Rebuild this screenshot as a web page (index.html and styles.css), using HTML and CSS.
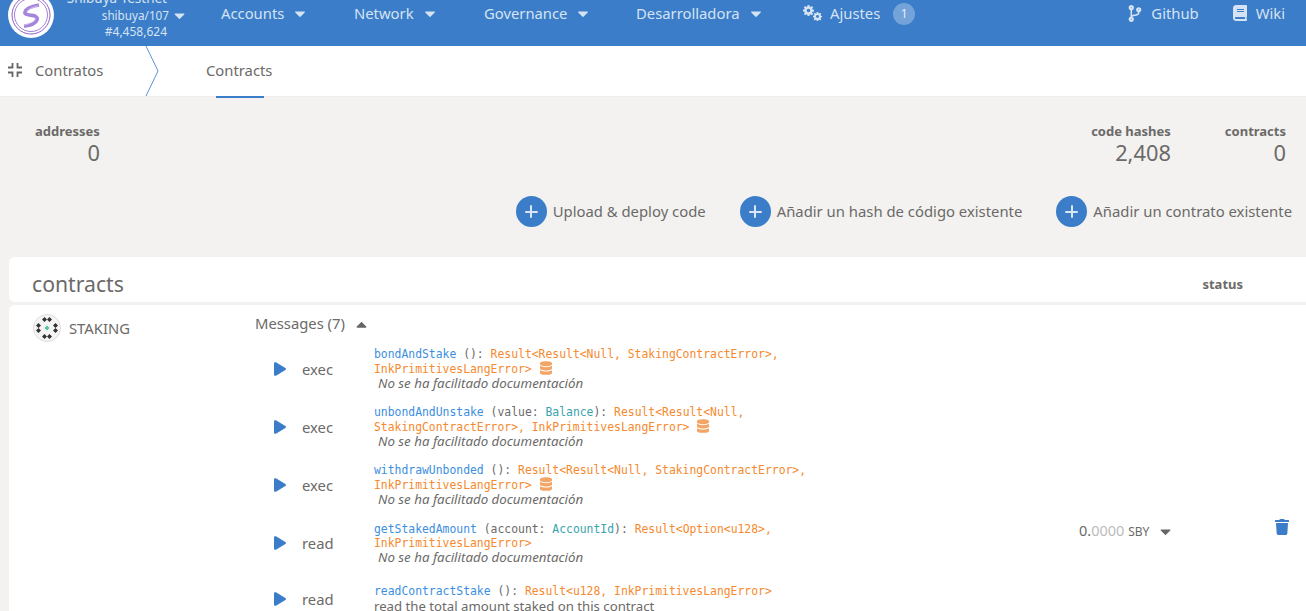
FILE: index.html
```html
<!DOCTYPE html>
<html lang="en">
<head>
    <meta charset="UTF-8">
    <title>Contracts</title>
    <link rel="stylesheet" href="styles.css">
</head>
<body>

<svg class="sprites" width="0" height="0">
    <symbol id="caret" viewBox="0 0 320 512"><path d="M31.3 192h257.3c17.8 0 26.7 21.5 14.1 34.1L174.1 354.8c-7.8 7.8-20.5 7.8-28.3 0L17.2 226.1C4.6 213.5 13.5 192 31.3 192z"/></symbol>
    <symbol id="caret-up" viewBox="0 0 320 512"><path d="M288.7 352H31.3c-17.8 0-26.7-21.5-14.1-34.1l128.7-128.7c7.8-7.8 20.5-7.8 28.3 0l128.7 128.7c12.6 12.6 3.7 34.1-14.2 34.1z"/></symbol>
    <symbol id="play" viewBox="0 0 448 512"><path d="M424.4 214.7L72.4 6.6C43.8-10.3 0 6.1 0 47.9V464c0 37.5 40.7 60.1 72.4 41.3l352-208c31.4-18.5 31.5-64.1 0-82.6z"/></symbol>
    <symbol id="database" viewBox="0 0 448 512"><path d="M448 73.143v45.714C448 159.143 347.667 192 224 192S0 159.143 0 118.857V73.143C0 32.857 100.333 0 224 0s224 32.857 224 73.143zM448 176v102.857C448 319.143 347.667 352 224 352S0 319.143 0 278.857V176c48.125 33.143 136.208 48.572 224 48.572S399.874 209.143 448 176zm0 160v102.857C448 479.143 347.667 512 224 512S0 479.143 0 438.857V336c48.125 33.143 136.208 48.572 224 48.572S399.874 369.143 448 336z"/></symbol>
    <symbol id="gear" viewBox="0 0 16 16"><path fill-rule="evenodd" d="M6.7 0h2.6l.4 2.2 1.3.6 1.9-1.3 1.8 1.8-1.3 1.9.6 1.3 2 .4v2.6l-2 .4-.6 1.3 1.3 1.9-1.8 1.8-1.9-1.3-1.3.6-.4 2H6.7l-.4-2-1.3-.6-1.9 1.3-1.8-1.8 1.3-1.9-.6-1.3-2-.4V6.7l2-.4.6-1.3-1.3-1.9 1.8-1.8L5 2.8l1.3-.6zM8 5.4a2.6 2.6 0 1 0 0 5.2 2.6 2.6 0 0 0 0-5.2z"/></symbol>
</svg>

<header class="topbar">
    <div class="logo">
        <svg viewBox="0 0 46 46" width="46" height="46">
            <circle cx="23" cy="23" r="23" fill="#fff"/>
            <circle cx="23" cy="23" r="19" fill="none" stroke="#8a63c9" stroke-width="1"/>
            <circle cx="23" cy="23" r="16.5" fill="none" stroke="#8a63c9" stroke-width="0.8"/>
            <path d="M31 13c-6 1-13 3-14 7-1 3 6 3 10 4 4 2 2 6-2 8-3 1-6 2-9 2" fill="none" stroke="#a585dc" stroke-width="3.6"/>
            <path d="M30 14c-5 1-10 3-11 6M27 26c0 3-5 6-11 7" fill="none" stroke="#e4d9f5" stroke-width="0.7"/>
        </svg>
    </div>
    <div class="chain">
        <div class="chain-name">Shibuya Testnet</div>
        <div class="chain-ver">shibuya/107 <svg class="caret"><use href="#caret"/></svg></div>
        <div class="chain-block">#4,458,624</div>
    </div>
    <nav class="menu">
        <a class="menu-accounts">Accounts <svg class="caret"><use href="#caret"/></svg></a>
        <a class="menu-network">Network <svg class="caret"><use href="#caret"/></svg></a>
        <a class="menu-gov">Governance <svg class="caret"><use href="#caret"/></svg></a>
        <a class="menu-dev">Desarrolladora <svg class="caret"><use href="#caret"/></svg></a>
        <a class="menu-settings">
            <span class="cogs">
                <svg class="cog-big"><use href="#gear"/></svg>
                <svg class="cog-small"><use href="#gear"/></svg>
            </span>
            Ajustes
            <span class="badge">1</span>
        </a>
    </nav>
    <div class="links">
        <a class="link-github">
            <svg viewBox="0 0 384 512" width="14" height="17"><path fill="currentColor" d="M384 144c0-44.2-35.8-80-80-80s-80 35.8-80 80c0 36.4 24.3 67.1 57.5 76.8-.6 16.1-4.2 28.5-11 36.9-15.4 19.2-49.3 22.4-85.2 25.7-28.2 2.6-57.4 5.4-81.3 16.9v-144c32.5-10.2 56-40.5 56-76.3 0-44.2-35.8-80-80-80S0 35.8 0 80c0 35.8 23.5 66.1 56 76.3v199.3C23.5 365.9 0 396.2 0 432c0 44.2 35.8 80 80 80s80-35.8 80-80c0-34-21.2-63.1-51.2-74.6 3.1-5.2 7.8-9.8 14.9-13.4 16.2-8.2 40.4-10.4 66.1-12.8 42.2-3.9 90-8.4 118.2-43.4 14-17.4 21.1-39.8 21.6-67.9 31.6-10.8 54.4-40.7 54.4-75.9zM80 64c8.8 0 16 7.2 16 16s-7.2 16-16 16-16-7.2-16-16 7.2-16 16-16zm0 384c-8.8 0-16-7.2-16-16s7.2-16 16-16 16 7.2 16 16-7.2 16-16 16zm224-320c8.8 0 16 7.2 16 16s-7.2 16-16 16-16-7.2-16-16 7.2-16 16-16z"/></svg>
            Github
        </a>
        <a class="link-wiki">
            <svg viewBox="0 0 448 512" width="14" height="16"><path fill="currentColor" d="M448 360V24c0-13.3-10.7-24-24-24H96C43 0 0 43 0 96v320c0 53 43 96 96 96h328c13.3 0 24-10.7 24-24v-16c0-7.5-3.5-14.3-8.9-18.7-4.2-15.4-4.2-59.3 0-74.7 5.4-4.3 8.9-11.1 8.9-18.6zM128 134c0-3.3 2.7-6 6-6h212c3.3 0 6 2.7 6 6v20c0 3.3-2.7 6-6 6H134c-3.3 0-6-2.7-6-6v-20zm0 64c0-3.3 2.7-6 6-6h212c3.3 0 6 2.7 6 6v20c0 3.3-2.7 6-6 6H134c-3.3 0-6-2.7-6-6v-20zm253.4 250H96c-17.7 0-32-14.3-32-32 0-17.6 14.4-32 32-32h285.4c-1.9 17.1-1.9 46.9 0 64z"/></svg>
            Wiki
        </a>
    </div>
</header>

<div class="tabs">
    <div class="tabs-title">
        <svg viewBox="0 0 14 14" width="14" height="14"><path d="M4.5 0v4.5H0M9.5 0v4.5H14M4.5 14V9.5H0M9.5 14V9.5H14" fill="none" stroke="#666" stroke-width="1.8"/></svg>
        Contratos
    </div>
    <svg class="tabs-arrow" viewBox="0 0 14 50" width="14" height="50"><path d="M1 0l12 25L1 50" fill="none" stroke="#5b93d6" stroke-width="1"/></svg>
    <a class="tab">Contracts</a>
</div>

<section class="summary">
    <div class="stats">
        <div class="stat">
            <label>addresses</label>
            <div class="stat-value">0</div>
        </div>
        <div class="stat stat-hashes">
            <label>code hashes</label>
            <div class="stat-value">2,408</div>
        </div>
        <div class="stat stat-contracts">
            <label>contracts</label>
            <div class="stat-value">0</div>
        </div>
    </div>
    <div class="actions">
        <a class="action"><span class="plus"></span>Upload &amp; deploy code</a>
        <a class="action"><span class="plus"></span>Añadir un hash de código existente</a>
        <a class="action"><span class="plus"></span>Añadir un contrato existente</a>
    </div>
</section>

<section class="list">
    <div class="list-head">
        <h1>contracts</h1>
        <div class="list-status">status</div>
    </div>
    <div class="contract">
        <div class="contract-name">
            <svg viewBox="0 0 28 28" width="28" height="28">
                <circle cx="14" cy="14" r="13.5" fill="#f4f4f4" stroke="#ddd"/>
                <g fill="#333">
                    <path d="M11.500 3l2.500 2.500-2.500 2.500-2.500-2.500zM16.500 3l2.500 2.500-2.500 2.500-2.500-2.500z"/>
                    <path d="M5.500 9l2.500 2.500-2.500 2.500-2.500-2.500zM5.500 14l2.500 2.500-2.500 2.500-2.500-2.500z"/>
                    <path d="M22.500 9l2.500 2.500-2.500 2.500-2.500-2.500zM22.500 14l2.500 2.500-2.500 2.500-2.500-2.500z"/>
                    <path d="M11.500 20l2.500 2.500-2.500 2.500-2.500-2.500zM16.500 20l2.500 2.500-2.500 2.500-2.500-2.500z"/>
                </g>
                <path d="M14 11.500l2.500 2.500-2.500 2.500-2.500-2.500z" fill="#5cc09a"/>
            </svg>
            STAKING
        </div>
        <div class="messages">
            <div class="messages-toggle">Messages (7) <svg class="caret caret-dark"><use href="#caret-up"/></svg></div>

            <div class="msg">
                <svg class="play"><use href="#play"/></svg>
                <div class="msg-kind">exec</div>
                <div class="msg-text">
                    <div class="sig"><span class="fn">bondAndStake</span> (): <span class="ret">Result&lt;Result&lt;Null, StakingContractError&gt;, InkPrimitivesLangError&gt;</span> <svg class="db"><use href="#database"/></svg></div>
                    <div class="doc">No se ha facilitado documentación</div>
                </div>
            </div>

            <div class="msg">
                <svg class="play"><use href="#play"/></svg>
                <div class="msg-kind">exec</div>
                <div class="msg-text">
                    <div class="sig"><span class="fn">unbondAndUnstake</span> (value: <span class="type">Balance</span>): <span class="ret">Result&lt;Result&lt;Null, StakingContractError&gt;, InkPrimitivesLangError&gt;</span> <svg class="db"><use href="#database"/></svg></div>
                    <div class="doc">No se ha facilitado documentación</div>
                </div>
            </div>

            <div class="msg">
                <svg class="play"><use href="#play"/></svg>
                <div class="msg-kind">exec</div>
                <div class="msg-text">
                    <div class="sig"><span class="fn">withdrawUnbonded</span> (): <span class="ret">Result&lt;Result&lt;Null, StakingContractError&gt;, InkPrimitivesLangError&gt;</span> <svg class="db"><use href="#database"/></svg></div>
                    <div class="doc">No se ha facilitado documentación</div>
                </div>
            </div>

            <div class="msg msg-tall">
                <svg class="play"><use href="#play"/></svg>
                <div class="msg-kind">read</div>
                <div class="msg-text">
                    <div class="sig"><span class="fn">getStakedAmount</span> (account: <span class="type">AccountId</span>): <span class="ret">Result&lt;Option&lt;u128&gt;, InkPrimitivesLangError&gt;</span></div>
                    <div class="doc">No se ha facilitado documentación</div>
                </div>
                <div class="output">0.<span class="output-dim">0000</span> <span class="output-unit">SBY</span> <svg class="caret caret-dark"><use href="#caret"/></svg></div>
                <svg class="trash" viewBox="0 0 448 512" width="14" height="16"><path d="M432 32H312l-9.4-18.7A24 24 0 0 0 281.1 0H166.8a23.72 23.72 0 0 0-21.4 13.3L136 32H16A16 16 0 0 0 0 48v32a16 16 0 0 0 16 16h416a16 16 0 0 0 16-16V48a16 16 0 0 0-16-16zM53.2 467a48 48 0 0 0 47.9 45h245.800a48 48 0 0 0 47.9-45L416 128H32z"/></svg>
            </div>

            <div class="msg msg-short">
                <svg class="play"><use href="#play"/></svg>
                <div class="msg-kind">read</div>
                <div class="msg-text">
                    <div class="sig"><span class="fn">readContractStake</span> (): <span class="ret">Result&lt;u128, InkPrimitivesLangError&gt;</span></div>
                    <div class="doc-plain">read the total amount staked on this contract</div>
                </div>
            </div>
        </div>
    </div>
</section>

</body>
</html>
```

FILE: styles.css
```css
html, body {
    height: 611px;
    overflow: hidden;
}
body {
    margin: 0;
    font-family: "Noto Sans", "Open Sans", sans-serif;
    font-size: 14.8px;
    color: #6b6a68;
    background-color: #f3f2f0;
}
.sprites {
    position: absolute;
}
.caret {
    width: 11px;
    height: 17px;
    fill: currentColor;
    vertical-align: -4px;
}
.caret-dark {
    fill: #666;
}

/* top bar */
.topbar {
    height: 46px;
    overflow: hidden;
    display: flex;
    align-items: flex-start;
    background-color: #3b7dc8;
    color: #d5e3f4;
}
.logo {
    margin: -8px 0 0 8px;
    height: 46px;
}
.chain {
    width: 113px;
    margin-top: -9px;
    text-align: right;
    font-size: 11.7px;
    line-height: 15.5px;
    white-space: nowrap;
}
.chain-name {
    font-size: 13.5px;
}
.chain-ver {
    margin-right: -18px;
}
.chain-ver .caret {
    margin-left: 2px;
}
.chain-block {
    font-size: 12px;
}
.menu {
    display: flex;
    margin-left: 54px;
    padding-top: 3px;
}
.menu a {
    display: flex;
    align-items: center;
    gap: 10px;
    height: 20px;
    white-space: nowrap;
}
.menu .caret {
    width: 12px;
}
.menu-accounts { width: 133px; }
.menu-network { width: 130px; }
.menu-gov { width: 152px; }
.menu-dev { width: 167px; }
.menu .menu-settings {
    gap: 8px;
}
.cogs {
    position: relative;
    width: 19px;
    height: 18px;
}
.cog-big {
    position: absolute;
    left: 0;
    top: 1px;
    width: 11px;
    height: 11px;
    fill: currentColor;
}
.cog-small {
    position: absolute;
    left: 10px;
    top: 8px;
    width: 9px;
    height: 9px;
    fill: currentColor;
}
.badge {
    flex-shrink: 0;
    width: 22px;
    height: 22px;
    border-radius: 50%;
    background-color: #74a3da;
    color: #e6eff9;
    font-size: 12px;
    line-height: 22px;
    text-align: center;
    margin: 2px 0 0 5px;
}
.links {
    display: flex;
    margin-left: auto;
    gap: 34px;
    padding: 4px 21px 0 0;
    line-height: 18px;
}
.links a {
    display: flex;
    align-items: center;
    gap: 9px;
}

/* breadcrumb tabs */
.tabs {
    height: 50px;
    display: flex;
    align-items: center;
    background-color: #fff;
    border-bottom: 1px solid #eeedeb;
    box-sizing: content-box;
}
.tabs-title {
    display: flex;
    align-items: center;
    gap: 13px;
    width: 137px;
    padding: 0 0 2px 8px;
}
.tabs-arrow {
    flex-shrink: 0;
}
.tab {
    position: relative;
    height: 50px;
    line-height: 48px;
    margin-left: 47px;
}
.tab::after {
    content: "";
    position: absolute;
    left: 10px;
    right: 8px;
    bottom: -2px;
    height: 2px;
    background-color: #3b7dc8;
}

/* summary */
.stats {
    display: flex;
    padding: 26px 20px 0 35px;
}
.stat {
    text-align: right;
}
.stat label {
    display: block;
    font-size: 13px;
    font-weight: 700;
    line-height: 16px;
}
.stat-value {
    font-size: 21.8px;
    line-height: 29px;
    margin-top: -1px;
}
.stat-hashes {
    margin-left: auto;
}
.stat-contracts {
    margin-left: 54px;
}
.actions {
    display: flex;
    justify-content: flex-end;
    gap: 34px;
    padding: 29px 14px 0 0;
    font-size: 14.85px;
}
.action {
    display: flex;
    align-items: center;
    gap: 6px;
    line-height: 31px;
}
.plus {
    position: relative;
    width: 31px;
    height: 31px;
    border-radius: 50%;
    background-color: #3b7dc8;
}
.plus::before, .plus::after {
    content: "";
    position: absolute;
    background-color: #d9e6f5;
    border-radius: 1px;
}
.plus::before {
    left: 9px;
    right: 9px;
    top: 14.5px;
    height: 2px;
}
.plus::after {
    top: 9px;
    bottom: 9px;
    left: 14.5px;
    width: 2px;
}

/* contract list */
.list {
    margin: 30px 0 0 9px;
}
.list-head {
    height: 45px;
    box-sizing: border-box;
    padding: 8px 63px 0 23px;
    display: flex;
    align-items: center;
    justify-content: space-between;
    background-color: #fff;
    border-radius: 6px 0 0 6px;
    margin-bottom: 3px;
}
.list-head h1 {
    margin: 0;
    font-size: 21.2px;
    font-weight: 400;
}
.list-status {
    font-size: 13px;
    font-weight: 700;
}
.contract {
    display: flex;
    background-color: #fff;
    border-radius: 6px 0 0 0;
    height: 320px;
    padding: 8px 0 0 24px;
}
.contract-name {
    display: flex;
    align-items: flex-start;
    width: 222px;
    gap: 8px;
    line-height: 28px;
    padding-top: 1px;
}
.messages {
    flex: 1;
}
.messages-toggle {
    line-height: 20px;
    margin-bottom: 13px;
}
.messages-toggle .caret {
    margin-left: 7px;
}
.msg {
    display: grid;
    grid-template-columns: 28px 72px 440px 1fr auto;
    align-items: start;
    padding-left: 19px;
    height: 58px;
}
.msg-tall {
    height: 62px;
    margin-top: 1px;
}
.play {
    width: 12px;
    height: 14px;
    margin-top: 16px;
    fill: #3b7dc8;
}
.msg-tall .play {
    margin-top: 15px;
}
.msg-short .play {
    margin-top: 9px;
}
.msg-kind {
    line-height: 20px;
    margin-top: 13px;
}
.msg-tall .msg-kind {
    margin-top: 12px;
}
.msg-short .msg-kind {
    margin-top: 6px;
}
.sig {
    font-family: "DejaVu Sans Mono", "Liberation Mono", monospace;
    font-size: 11.4px;
    line-height: 14px;
    padding-top: 1px;
}
.fn {
    color: #3c8fdf;
}
.type {
    color: #38a3ad;
}
.ret {
    color: #f6892e;
}
.db {
    width: 12px;
    height: 14px;
    margin-left: 1px;
    vertical-align: -2px;
    fill: #f3a566;
}
.doc {
    font-size: 13.3px;
    font-style: italic;
    line-height: 14.5px;
    padding-left: 4px;
}
.doc-plain {
    font-size: 13.2px;
    line-height: 14.5px;
    margin-top: 1px;
}
.output {
    margin-left: 265px;
    font-size: 14.5px;
    line-height: 18px;
    white-space: nowrap;
}
.output-dim {
    color: #bcbcba;
}
.output-unit {
    font-size: 12px;
    margin-right: 7px;
}
.trash {
    fill: #3b7dc8;
    margin: -2px 17px 0 0;
}
```
